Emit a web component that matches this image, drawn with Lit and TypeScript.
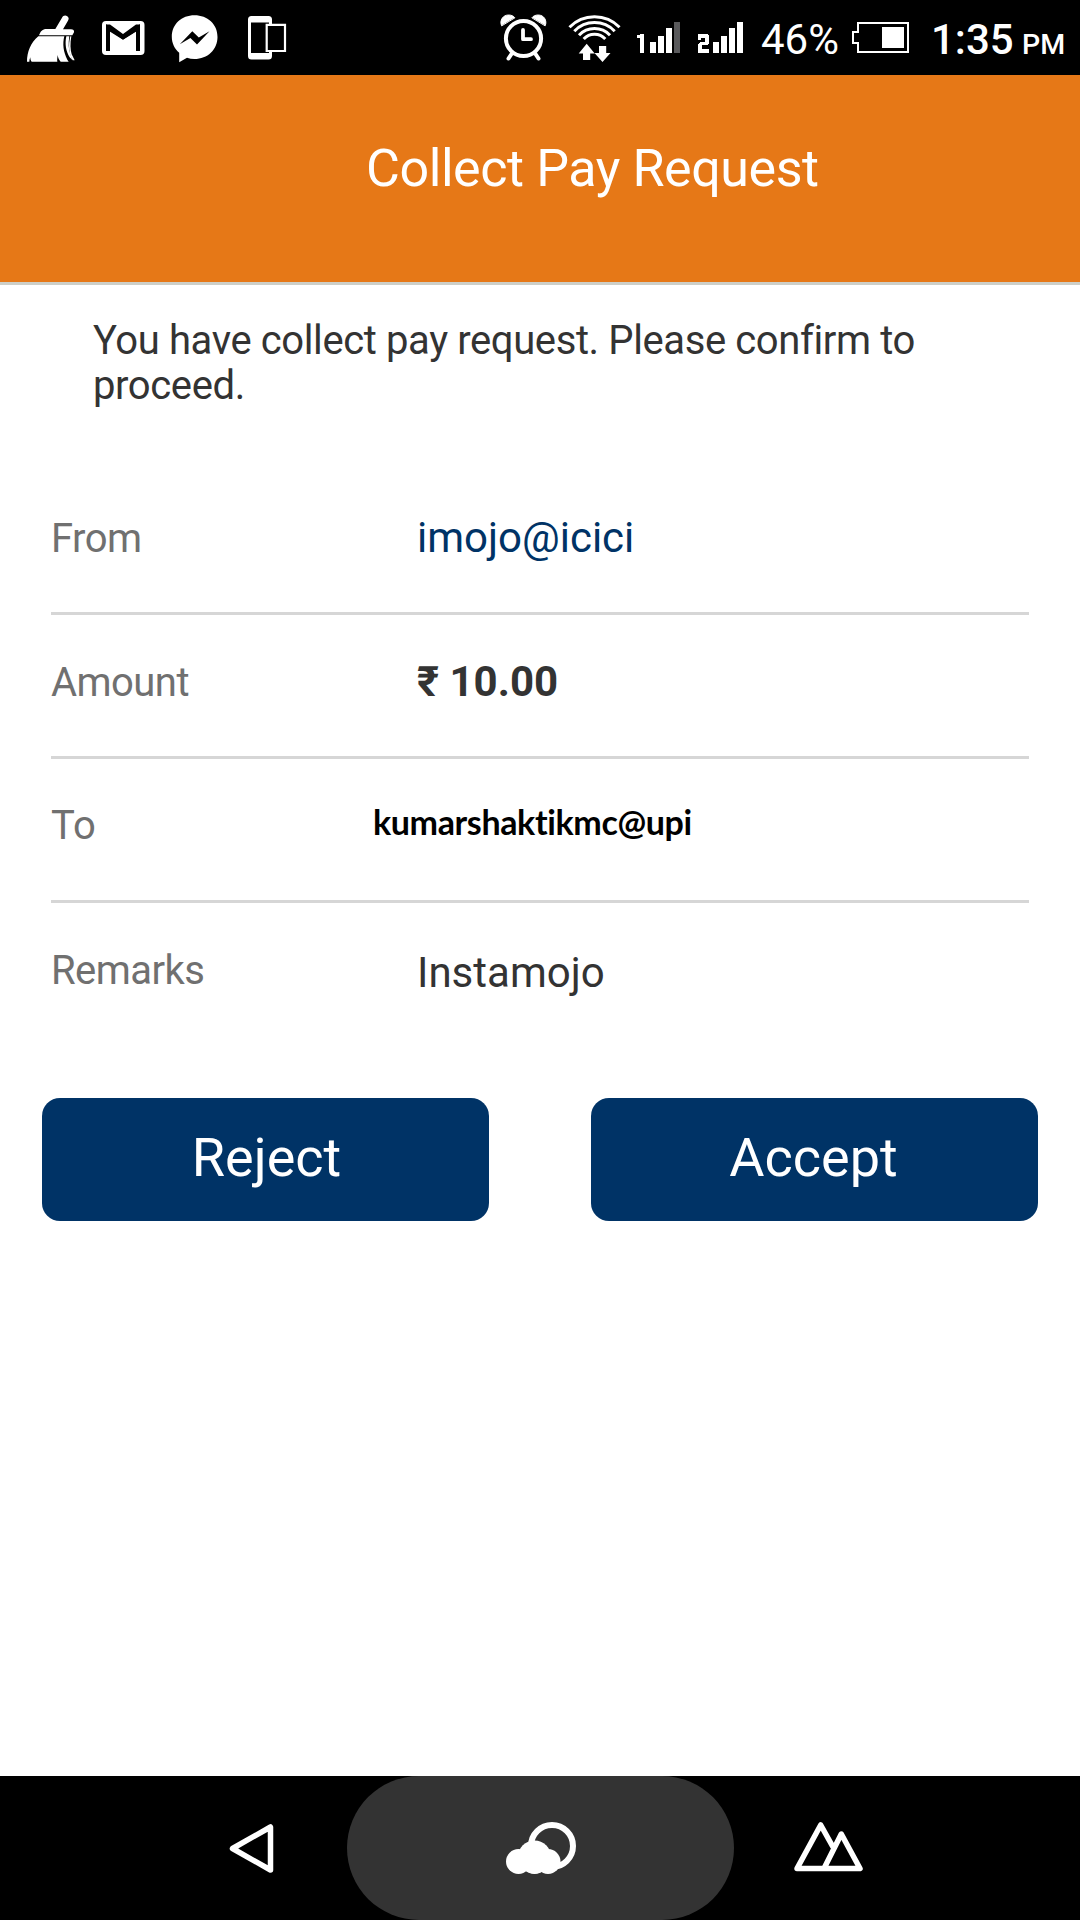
import { LitElement, html, css } from "lit";
import { customElement } from "lit/decorators.js";

@customElement("status-bar")
class StatusBar extends LitElement {
  static styles = css`
    :host { display: block; }
    .bar { display: flex; align-items: center; height: 75px; background: #000; color: #fff; font-family: Roboto, sans-serif; }
    svg { display: block; flex: none; height: 75px; }
    .broom { width: 49px; margin-left: 26px; }
    .mail { width: 43px; margin-left: 27px; }
    .chat { width: 47px; margin-left: 26px; }
    .cast { width: 39px; margin-left: 30px; }
    .alarm { width: 47px; margin-left: 213px; }
    .wifi { width: 53px; margin-left: 21px; }
    .sim1 { width: 44px; margin-left: 15px; }
    .sim2 { width: 47px; margin-left: 17px; }
    .percent { width: 78px; margin-left: 17px; font-size: 42px; line-height: 50px; white-space: nowrap; padding-top: 5px; }
    .battery { width: 58px; margin-left: 12px; }
    .clock { display: flex; align-items: baseline; margin-left: 22px; font-weight: 500; white-space: nowrap; padding-top: 5px; }
    .time { font-size: 42px; line-height: 50px; width: 91px; }
    .period { font-size: 28.5px; }
  `;
  render() {
    return html`<div class="bar">
      <svg class="broom" viewBox="78 0 147 225" fill="#fff">
        <path d="M186 53c4-9 17-8 20 2 0 3-1 6-3 9l-14 24h24c7 0 10 4 9 9l-5 9H117c4-12 11-19 22-19h27z"/>
        <path d="M115 109h78c-6 22-3 48 9 70l4 6h-24c-5-5-8-12-9-20-1 8-2 14-1 20H95c-3-3-4-7-4-13-2 5-3 9-3 13h-7c0-28 11-58 34-76z"/>
        <path d="M199 109h9c-3 20-3 38 3 54l6 17-8-8c-11-18-15-40-10-63z"/>
        <path d="M211 109h3c-4 22-3 40 1 54l9 18h-6c-11-19-14-44-7-72z"/>
      </svg>
      <svg class="mail" viewBox="102 0 43 75">
        <rect x="102" y="21" width="42.500" height="34" rx="4" fill="#fff"/>
        <path d="M108 51V28l15 9.500L138 28v23" fill="none" stroke="#000" stroke-width="4"/>
        <path d="M106 24.500h4l13 9.500 13-9.500h4v4L123 39.500 106 28z"/>
      </svg>
      <svg class="chat" viewBox="171 0 47 75">
        <path d="M194.500 15.300c-13 0-22.700 9-22.700 21.500 0 6.500 2.800 12 7.400 16v9.400l7.800-4.500c2.300.8 4.800 1.200 7.500 1.200 13 0 23-9.200 23-22s-10-21.600-23-21.600z" fill="#fff"/>
        <path d="M179.800 44.200l12.500-13 6.500 6.200 10.700-6.200-12.500 13.300-6.600-6.400z"/>
      </svg>
      <svg class="cast" viewBox="248 0 39 75">
        <path fill="#fff" fill-rule="evenodd" d="M251.500 16h17q3.500 0 3.500 3.500v36.500q0 3.500-3.500 3.500h-17q-3.500 0-3.500-3.500V19.500q0-3.500 3.500-3.500zM251 22.500v30.500h18V22.500z"/>
        <path d="M266.700 24.800h18.300v26.200h-18.300z" fill="#000" stroke="#fff" stroke-width="2.200"/>
      </svg>
      <svg class="alarm" viewBox="500 0 47 75" fill="none" stroke="#fff" stroke-linecap="round">
        <circle cx="523.500" cy="38.500" r="17.600" stroke-width="4"/>
        <path d="M523 30v9.200h8" stroke-width="3.800" stroke-linejoin="round"/>
        <path d="M511.500 54l-3 4.500M535.500 54l3 4.500" stroke-width="4"/>
        <path d="M501.500 25.500c-2.200-5 1.500-10.500 7-10.500 3 0 5 1 6.200 2.500zM545.300 25.500c2.200-5-1.500-10.500-7-10.500-3 0-5 1-6.200 2.500z" fill="#fff" stroke-width="1"/>
      </svg>
      <svg class="wifi" viewBox="568 0 53 75" fill="none" stroke="#fff" stroke-width="3">
        <path d="M569.500 27.300a35 35 0 0 1 50 0M574.300 31.200a28 28 0 0 1 40.400 0M579 35.200a21.500 21.500 0 0 1 31 0M583.700 39a14.500 14.500 0 0 1 21.600 0"/>
        <path d="M586.700 43.700l8 9.800h-4.500V60H583v-6.500h-4.300zM599 46h7.200v7h4.300l-8 9-8-9h4.500z" fill="#fff" stroke="none"/>
      </svg>
      <svg class="sim1" viewBox="636 0 44 75" fill="#fff" shape-rendering="crispEdges">
        <path d="M640 34h4v19h-4V38h-3v-3h3zM650 42h6v11h-6zM658 36h6v17h-6zM666 28h6v25h-6z"/>
        <path d="M674 22h6v31h-6z" fill="#59595b"/>
      </svg>
      <svg class="sim2" viewBox="697 0 47 75" fill="#fff" shape-rendering="crispEdges">
        <path d="M698 34h9l2 2v7l-2 2h-5v4h7v4h-11v-9l2-2h5v-4h-4v2h-3zM713 42h6v11h-6zM721 36h6v17h-6zM729 28h6v25h-6zM737 22h6v31h-6z"/>
      </svg>
      <span class="percent">46%</span>
      <svg class="battery" viewBox="851 0 58 75" shape-rendering="crispEdges">
        <path d="M858 23h50v29h-50v-9h-5V32h5z" fill="none" stroke="#fff" stroke-width="2"/>
        <path d="M882 27h22v21h-22z" fill="#fff"/>
      </svg>
      <span class="clock"><span class="time">1:35</span><span class="period">PM</span></span>
    </div>`;
  }
}

@customElement("nav-bar")
class NavBar extends LitElement {
  static styles = css`
    :host { display: block; }
    .nav { display: flex; justify-content: center; height: 144px; background: #000; }
    .slot { display: flex; align-items: center; justify-content: center; width: 188px; }
    .home { width: 387px; background: #333; border-radius: 72px; }
    svg { display: block; width: 80px; height: 80px; }
  `;
  render() {
    return html`<div class="nav">
      <div class="slot"><svg viewBox="213 1808 80 80"><path d="M232.500 1848.500L270.500 1827v43z" fill="none" stroke="#fff" stroke-width="5.500" stroke-linejoin="round"/></svg></div>
      <div class="slot home"><svg viewBox="500 1808 80 80" fill="#fff">
        <circle cx="552" cy="1846" r="21" fill="none" stroke="#fff" stroke-width="6"/>
        <circle cx="518.500" cy="1861.500" r="12.500"/><circle cx="534.500" cy="1857" r="16.500"/><circle cx="534.500" cy="1861" r="13"/><circle cx="548" cy="1861.500" r="12.500"/>
      </svg></div>
      <div class="slot"><svg viewBox="788 1808 80 80" fill="none" stroke="#fff" stroke-width="5.500" stroke-linejoin="round" stroke-linecap="round"><path d="M824 1868.500H797L820.700 1825l12 21.500M824 1868.500L841.300 1834l18.700 34.500z"/></svg></div>
    </div>`;
  }
}

@customElement("app-root")
class AppRoot extends LitElement {
  static styles = css`
    :host { display: block; }
    .screen { display: flex; flex-direction: column; height: 1920px; width: 1080px; background: #fff; font-family: Roboto, sans-serif; color: #333; }
    .header { box-sizing: border-box; height: 210px; padding: 63px 0 0 366px; background: #e67817; border-bottom: 3px solid #cdcfc8; color: #fff; font-size: 52px; line-height: 62px; letter-spacing: -0.42px; white-space: nowrap; }
    .message { margin: 33px 93px 0; width: 860px; font-size: 40px; line-height: 45px; letter-spacing: -0.39px; }
    .details { margin: 63px 51px 0; }
    .row { display: flex; box-sizing: border-box; height: 144px; border-bottom: 3px solid #d6d6d6; align-items: baseline; padding-top: 43px; line-height: 48px; }
    .row:last-child { border: 0; height: 120px; }
    .label { width: 366px; color: #707070; font-size: 40px; letter-spacing: -0.55px; }
    .label.short { letter-spacing: 0; }
    .value { font-size: 42px; }
    .id { color: #036; }
    .amount { font-weight: 700; }
    .payee { margin-left: -44px; font-family: Lato, sans-serif; font-weight: 700; font-size: 34px; letter-spacing: -0.37px; color: #000; position: relative; top: -4px; }
    .remark { position: relative; top: 3px; }
    .actions { display: flex; justify-content: space-between; margin: 75px 42px 0; }
    .action { width: 447px; height: 123px; border: 0; border-radius: 18px; background: #036; color: #fff; font: 400 54px Roboto, sans-serif; padding: 0 0 4px 2px; }
    .accept { padding: 0 2px 4px 0; }
    nav-bar { margin-top: auto; }
  `;
  render() {
    return html`<div class="screen">
      <status-bar></status-bar>
      <div class="header">Collect Pay Request</div>
      <div class="message">You have collect pay request. Please confirm to proceed.</div>
      <div class="details">
        <div class="row"><span class="label">From</span><span class="value id">imojo@icici</span></div>
        <div class="row"><span class="label">Amount</span><span class="value amount">₹ 10.00</span></div>
        <div class="row"><span class="label short">To</span><span class="value payee">kumarshaktikmc@upi</span></div>
        <div class="row"><span class="label">Remarks</span><span class="value remark">Instamojo</span></div>
      </div>
      <div class="actions"><button class="action">Reject</button><button class="action accept">Accept</button></div>
      <nav-bar></nav-bar>
    </div>`;
  }
}
